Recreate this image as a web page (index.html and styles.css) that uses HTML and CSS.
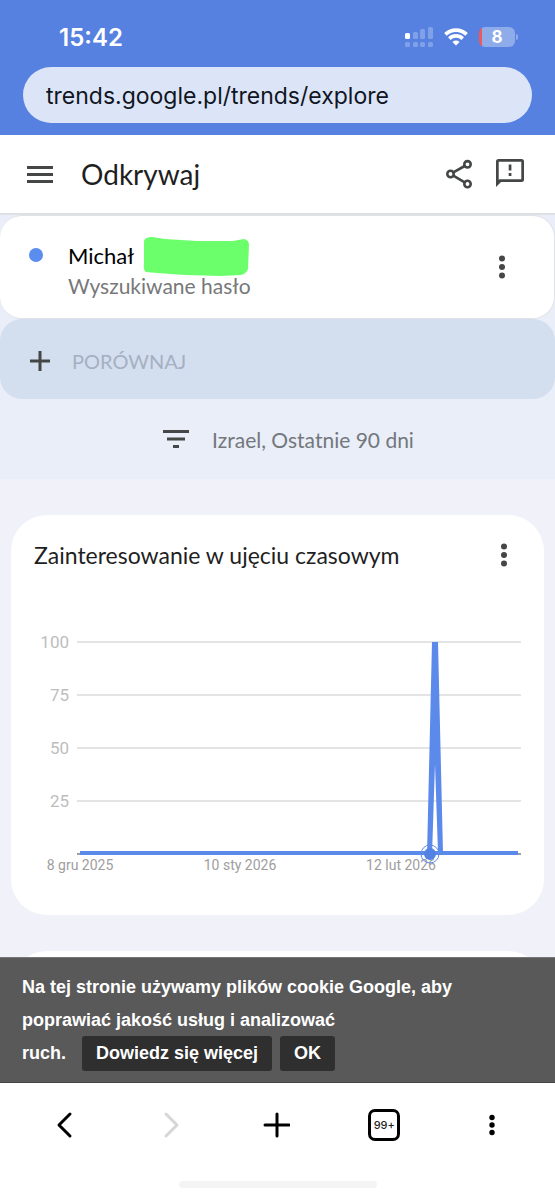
FILE: index.html
```
<!DOCTYPE html>
<html lang="pl">
<head>
    <meta charset="UTF-8">
    <meta name="viewport" content="width=device-width, initial-scale=1.0">
    <title>Odkrywaj</title>
    <link rel="stylesheet" href="styles.css">
</head>
<body>
    <!-- Browser top -->
    <div class="browser-top">
        <div class="status-bar">
            <span class="clock">15:42</span>
            <div class="status-icons">
                <svg width="28" height="20" viewBox="0 0 28 20" fill="#fff">
                    <rect x="0" y="6" width="5" height="6" rx="1.5"/>
                    <g opacity="0.25">
                        <rect x="8" y="5" width="5" height="7" rx="1.5"/>
                        <rect x="15" y="2" width="5" height="10" rx="1.5"/>
                        <rect x="23" y="0" width="5" height="12" rx="1.5"/>
                        <rect x="0" y="15" width="5" height="5" rx="1.5"/>
                        <rect x="8" y="15" width="5" height="5" rx="1.5"/>
                        <rect x="15" y="15" width="5" height="5" rx="1.5"/>
                        <rect x="23" y="15" width="5" height="5" rx="1.5"/>
                    </g>
                </svg>
                <svg width="24" height="18" viewBox="0 0 24 18" fill="none" stroke="#fff" stroke-width="3.6">
                    <path d="M1.4 6.4a15.2 15.2 0 0 1 21.2 0"/>
                    <path d="M5.3 10.6a9.6 9.6 0 0 1 13.4 0"/>
                    <path d="M12 17.6L8.4 14a5.2 5.2 0 0 1 7.2 0z" fill="#fff" stroke="none"/>
                </svg>
                <div class="battery"><span>8</span></div>
            </div>
        </div>
        <input class="address" type="text" aria-label="Adres" value="trends.google.pl/trends/explore">
    </div>

    <!-- Page header -->
    <header class="header">
        <button class="icon-btn" aria-label="Menu">
            <svg width="28" height="20" viewBox="0 0 28 20" fill="#444746">
                <path d="M1 2h26v3H1zM1 9h26v3H1zM1 16h26v3H1z"/>
            </svg>
        </button>
        <h1>Odkrywaj</h1>
        <button class="icon-btn" aria-label="Udostępnij">
            <svg width="28" height="30" viewBox="0 0 28 30" fill="none" stroke="#444746" stroke-width="2.6">
                <circle cx="22.500" cy="5.300" r="3.200"/>
                <circle cx="5.500" cy="15" r="3.200"/>
                <circle cx="22.500" cy="25" r="3.200"/>
                <path d="M19.700 7L8.300 13.400M8.300 16.600L19.700 23.400"/>
            </svg>
        </button>
        <button class="icon-btn" aria-label="Prześlij opinię">
            <svg width="30" height="30" viewBox="0 0 30 30" fill="#444746">
                <path d="M3.500 0h23a2.500 2.500 0 0 1 2.500 2.500v18a2.500 2.500 0 0 1-2.500 2.500H6L1 28V2.500A2.500 2.500 0 0 1 3.500 0zM3.700 2.700v18L4.700 20.300H26.300V2.700z" fill-rule="evenodd"/>
                <path d="M13.700 5.500h2.700v6h-2.700zM13.700 14h2.700v3h-2.700z"/>
            </svg>
        </button>
    </header>

    <main class="content">
        <!-- Search term and filters -->
        <section class="explore">
            <div class="term">
                <span class="term-dot"></span>
                <div class="term-text">
                    <p class="term-name">Michał
                        <svg class="marker" width="107" height="40" viewBox="0 0 107 40" fill="#6bff6b">
                            <path d="M1 4Q2 0 9 0L22 2L54 4H90L101 2Q106 3 106 8L105 32Q103 37 98 38L78 39L42 38L14 36L3 35Q0 33 1 26z"/>
                        </svg>
                    </p>
                    <p class="term-type">Wyszukiwane hasło</p>
                </div>
                <button class="icon-btn" aria-label="Więcej opcji">
                    <svg width="8" height="24" viewBox="0 0 8 24" fill="#444746">
                        <circle cx="4" cy="3.500" r="3"/><circle cx="4" cy="12" r="3"/><circle cx="4" cy="20.500" r="3"/>
                    </svg>
                </button>
            </div>
            <button class="compare">
                <svg width="22" height="22" viewBox="0 0 22 22" stroke="#444746" stroke-width="3">
                    <path d="M11 1v20M1 11h20"/>
                </svg>
                PORÓWNAJ
            </button>
            <button class="filters">
                <svg width="26" height="18" viewBox="0 0 26 18" fill="#444746">
                    <path d="M0 0h26v3H0zM4 7.500h18v3H4zM10 15h6v3h-6z"/>
                </svg>
                Izrael, Ostatnie 90 dni
            </button>
        </section>

        <!-- Interest over time -->
        <section class="card">
            <div class="card-header">
                <h2>Zainteresowanie w ujęciu czasowym</h2>
                <button class="icon-btn" aria-label="Więcej opcji">
                    <svg width="8" height="24" viewBox="0 0 8 24" fill="#444746">
                        <circle cx="4" cy="3.500" r="3"/><circle cx="4" cy="12" r="3"/><circle cx="4" cy="20.500" r="3"/>
                    </svg>
                </button>
            </div>
            <svg class="chart" viewBox="0 0 533 321">
                <g class="grid">
                    <path d="M66 48H510M66 101H510M66 154H510M66 207H510"/>
                    <path class="axis" d="M66 260H510"/>
                </g>
                <g class="y-labels">
                    <text x="58" y="54">100</text>
                    <text x="58" y="107">75</text>
                    <text x="58" y="160">50</text>
                    <text x="58" y="213">25</text>
                </g>
                <g class="x-labels">
                    <text x="69" y="276">8 gru 2025</text>
                    <text x="229" y="276">10 sty 2026</text>
                    <text x="390" y="276">12 lut 2026</text>
                </g>
                <path class="line" d="M69 259H507"/>
                <path class="peak" d="M416 261L421 48h6L432 259H427L424 170L421 261z"/>
                <circle class="point-ring" cx="419" cy="260" r="9"/>
                <circle class="point" cx="419" cy="260" r="6"/>
            </svg>
        </section>

        <section class="card"></section>
    </main>

    <!-- Cookie notice -->
    <div class="cookies">
        <p>Na tej stronie używamy plików cookie Google, aby poprawiać jakość usług i analizować
            <span class="cookies-actions">ruch. <a href="#">Dowiedz się więcej</a><button>OK</button></span>
        </p>
    </div>

    <!-- Browser toolbar -->
    <footer class="toolbar">
        <nav class="toolbar-buttons">
            <button class="icon-btn" aria-label="Wstecz">
                <svg width="28" height="28" viewBox="0 0 28 28" fill="none" stroke="#000" stroke-width="3" stroke-linecap="round" stroke-linejoin="round">
                    <path d="M19 3L8 14l11 11"/>
                </svg>
            </button>
            <button class="icon-btn" aria-label="Dalej">
                <svg width="28" height="28" viewBox="0 0 28 28" fill="none" stroke="#d6d6d6" stroke-width="3" stroke-linecap="round" stroke-linejoin="round">
                    <path d="M9 3l11 11L9 25"/>
                </svg>
            </button>
            <button class="icon-btn" aria-label="Nowa karta">
                <svg width="28" height="28" viewBox="0 0 28 28" stroke="#000" stroke-width="3" stroke-linecap="round">
                    <path d="M15 3v22M3 14h24"/>
                </svg>
            </button>
            <button class="tabs">99+</button>
            <button class="icon-btn" aria-label="Menu przeglądarki">
                <svg width="28" height="28" viewBox="0 0 28 28" fill="#000">
                    <circle cx="14" cy="6.500" r="2.700"/><circle cx="14" cy="14" r="2.700"/><circle cx="14" cy="21.500" r="2.700"/>
                </svg>
            </button>
        </nav>
        <div class="home-indicator"></div>
    </footer>
</body>
</html>
```
FILE: styles.css
```
/* Reset and body styling */
* {
    margin: 0;
    padding: 0;
    box-sizing: border-box;
}

body {
    display: flex;
    flex-direction: column;
    height: 100vh;
    background-color: #f1f2f9;
    font-family: "Lato", "Roboto", sans-serif;
    color: #1f1f1f;
}

button, input {
    border: none;
    background: none;
    font: inherit;
    color: inherit;
}

button {
    cursor: pointer;
}

svg {
    display: block;
    flex-shrink: 0;
}

.icon-btn {
    display: flex;
    align-items: center;
    justify-content: center;
}

/* Browser top */
.browser-top {
    padding: 20px 23px 12px;
    background-color: #5681e0;
    font-family: "Inter", sans-serif;
}

.status-bar {
    display: flex;
    align-items: center;
    justify-content: space-between;
    height: 34px;
    margin-bottom: 13px;
    padding: 0 17px 0 36px;
    color: #fff;
}

.clock {
    font-size: 24px;
    font-weight: 600;
}

.status-icons {
    display: flex;
    align-items: center;
    gap: 11px;
}

.battery {
    position: relative;
    width: 36px;
    height: 20px;
    border-radius: 6px;
    background: linear-gradient(to right, #ee5a5a 3px, #8eabea 3px);
    font-size: 17px;
    font-weight: 700;
    line-height: 20px;
    text-align: center;
}

.battery::after {
    content: "";
    position: absolute;
    top: 7px;
    right: -3px;
    width: 2px;
    height: 6px;
    border-radius: 0 2px 2px 0;
    background-color: #8eabea;
}

.address {
    display: block;
    width: 100%;
    height: 56px;
    padding: 2px 23px 0;
    border-radius: 28px;
    background-color: #dce5f8;
    font-size: 23px;
    color: #111522;
}

/* Page header */
.header {
    display: flex;
    align-items: center;
    height: 80px;
    padding: 0 30px 0 26px;
    border-bottom: 2px solid #dfe0e3;
    background-color: #fff;
    gap: 22px;
}

.header h1 {
    flex: 1;
    padding-left: 5px;
    font-size: 28px;
    font-weight: 400;
}

/* Search term and filters */
.content {
    flex: 1;
    min-height: 0;
    overflow: hidden;
}

.explore {
    background-color: #e9eef8;
}

.term {
    display: flex;
    height: 104px;
    padding: 0 48px 0 29px;
    border: 1px solid #e0e2e6;
    border-left: none;
    border-radius: 22px;
    background-color: #fff;
}

.term-dot {
    width: 14px;
    height: 14px;
    margin: 32px 25px 0 0;
    border-radius: 50%;
    background-color: #5b8def;
}

.term-text {
    flex: 1;
    padding-top: 25px;
    line-height: 30px;
}

.term-name {
    display: flex;
    height: 30px;
    gap: 9px;
    font-size: 22px;
    color: #000;
}

.marker {
    margin-top: -4px;
}

.term-type {
    font-size: 21px;
    color: #77787a;
}

.compare {
    display: flex;
    align-items: center;
    width: 100%;
    height: 80px;
    padding: 4px 29px 0;
    border-radius: 22px;
    background-color: #d3deef;
    gap: 21px;
    font-size: 20px;
    color: #a6afc2;
}

.filters {
    display: flex;
    align-items: center;
    justify-content: center;
    width: 100%;
    height: 80px;
    padding-left: 22px;
    gap: 23px;
    font-size: 21px;
    color: #74777c;
}

/* Cards */
.card {
    min-height: 400px;
    margin: 36px 11px 0;
    border-radius: 36px;
    background-color: #fff;
}

.card-header {
    display: flex;
    align-items: center;
    justify-content: space-between;
    height: 79px;
    padding: 0 36px 0 23px;
}

.card-header h2 {
    font-size: 23px;
    font-weight: 400;
}

/* Chart */
.chart {
    width: 100%;
    font-family: "Roboto", sans-serif;
}

.grid path {
    stroke: #e4e4e4;
    stroke-width: 2;
}

.grid .axis {
    stroke: #9e9e9e;
}

.y-labels {
    font-size: 17px;
    text-anchor: end;
    fill: #bdbdbd;
}

.x-labels {
    font-size: 14px;
    text-anchor: middle;
    fill: #9e9e9e;
}

.line {
    stroke: #5b8aea;
    stroke-width: 4;
}

.peak {
    fill: #5b8aea;
}

.point {
    fill: #5182e4;
}

.point-ring {
    fill: none;
    stroke: #5b8aea;
    stroke-width: 1;
}

/* Cookie notice */
.cookies {
    padding: 13px 22px;
    border-top: 1px solid #777;
    border-bottom: 1px solid #444;
    background-color: #595959;
    color: #fff;
    font-family: "Liberation Sans", sans-serif;
    font-size: 18px;
    font-weight: 700;
    line-height: 33px;
}

.cookies p {
    max-width: 460px;
}

.cookies-actions {
    display: flex;
    align-items: center;
    height: 32px;
}

.cookies a, .cookies button {
    height: 35px;
    padding: 0 14px;
    border-radius: 3px;
    background-color: #2f2f2f;
    color: #fff;
    line-height: 35px;
    text-decoration: none;
}

.cookies a {
    margin: 0 8px 0 16px;
}

/* Browser toolbar */
.toolbar {
    height: 117px;
    background-color: #fff;
}

.toolbar-buttons {
    display: flex;
    align-items: center;
    justify-content: space-around;
    height: 84px;
    padding: 0 10px 0 12px;
}

.tabs {
    width: 32px;
    height: 32px;
    border: 3px solid #000;
    border-radius: 7px;
    font-family: "Inter", sans-serif;
    font-size: 11px;
    font-weight: 500;
}

.home-indicator {
    width: 198px;
    height: 7px;
    margin: 14px auto 0;
    border-radius: 4px;
    background-color: #f4f4f4;
}
```
